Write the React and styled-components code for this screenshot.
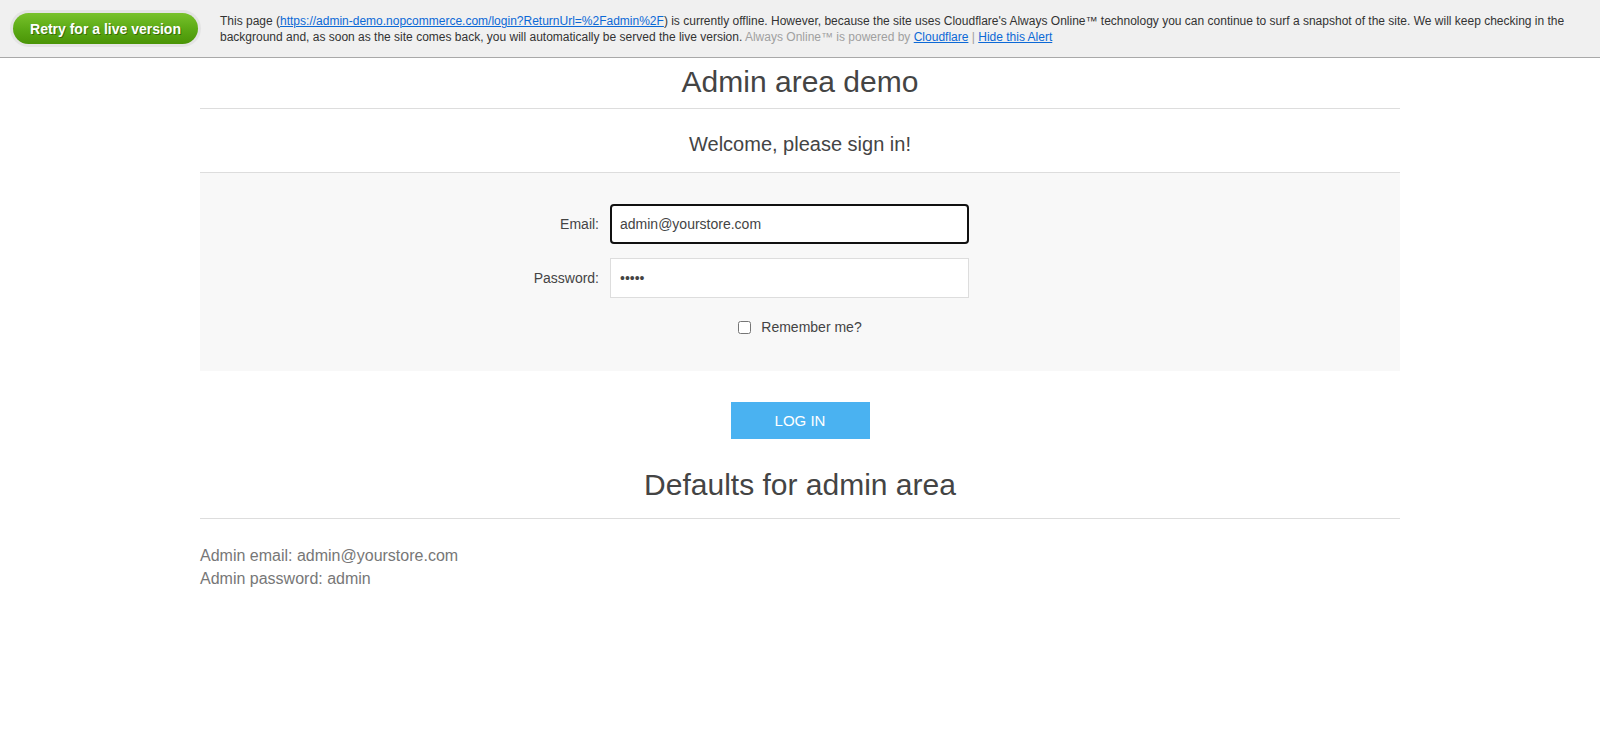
import React, { useState } from 'react';
import styled, { createGlobalStyle } from 'styled-components';

const GlobalStyle = createGlobalStyle`
  body {
    margin: 0;
    background: #fff;
    font-family: Arial, "Liberation Sans", Helvetica, sans-serif;
    color: #444;
  }
`;

// cloudflare alert bar
const AlertBar = styled.div`
  display: flex;
  align-items: flex-start;
  height: 57px;
  box-sizing: content-box;
  background: #f0f0f0;
  border-bottom: 1px solid #a9a9a9;
`;

const RetryHalo = styled.div`
  flex: none;
  margin: 10px 0 0 10px;
  padding: 3px;
  border-radius: 20px;
  background: #e4e4e4;
`;

const RetryButton = styled.button`
  display: block;
  width: 185px;
  height: 31px;
  border: none;
  border-radius: 16px;
  background: linear-gradient(to bottom, #78c22b 0%, #5aa814 55%, #4a9406 100%);
  color: #fff;
  font-family: Arial, "Liberation Sans", sans-serif;
  font-weight: bold;
  font-size: 14px;
  text-shadow: 1px 1px 0 rgba(0, 0, 0, 0.35);
  cursor: pointer;
`;

const AlertText = styled.p`
  margin: 13px 18px 0 19px;
  font-size: 12px;
  line-height: 16px;
  color: #333;
`;

const AlertLink = styled.a`
  color: #0c69d6;
  text-decoration: underline;
`;

const Muted = styled.span`
  color: #a0a0a0;
`;

// page
const Page = styled.div`
  width: 1200px;
  margin: 0 auto;
`;

const PageTitle = styled.h1`
  margin: 0;
  padding: ${props => props.padding || '6px 0 8px'};
  border-bottom: 1px solid #ddd;
  text-align: center;
  font-weight: normal;
  font-size: 30px;
  line-height: 36px;
  color: #444;
`;

const SubTitle = styled.h2`
  margin: 0;
  padding: 22px 0 15px;
  border-bottom: 1px solid #ddd;
  text-align: center;
  font-weight: normal;
  font-size: 20px;
  line-height: 26px;
  color: #444;
`;

const FormPanel = styled.div`
  display: flex;
  flex-direction: column;
  gap: 14px;
  padding: 31px 0 36px;
  background: #f8f8f8;
`;

const Row = styled.div`
  display: flex;
  align-items: center;
  justify-content: ${props => props.center ? 'center' : 'flex-start'};
`;

const Label = styled.label`
  width: 399px;
  margin-right: 11px;
  text-align: right;
  font-size: 14px;
  color: #444;
`;

const Input = styled.input`
  box-sizing: border-box;
  width: 359px;
  height: 40px;
  padding: 0 ${props => props.focused ? '8px' : '9px'};
  border: ${props => props.focused ? '2px solid #111' : '1px solid #ddd'};
  border-radius: ${props => props.focused ? '4px' : '0'};
  background: #fff;
  font-family: Arial, "Liberation Sans", sans-serif;
  font-size: 14px;
  color: #444;
  outline: none;
`;

const CheckLabel = styled.label`
  display: flex;
  align-items: center;
  gap: 10px;
  margin-top: 7px;
  font-size: 14px;
  color: #444;

  input {
    width: 13px;
    height: 13px;
    margin: 0;
  }
`;

const Actions = styled.div`
  display: flex;
  justify-content: center;
  padding: 31px 0 14px;
`;

const LoginButton = styled.button`
  width: 139px;
  height: 37px;
  border: none;
  background: #4ab2f1;
  color: #fff;
  font-family: Arial, "Liberation Sans", sans-serif;
  font-size: 15px;
  text-transform: uppercase;
  cursor: pointer;
`;

const Defaults = styled.div`
  padding-top: 25px;
  font-size: 16px;
  line-height: 23px;
  color: #777;
`;

const App = () => {
  const [email, setEmail] = useState('admin@yourstore.com');
  const [password, setPassword] = useState('admin');
  const [remember, setRemember] = useState(false);

  return (
    <>
      <GlobalStyle />
      <AlertBar>
        <RetryHalo>
          <RetryButton>Retry for a live version</RetryButton>
        </RetryHalo>
        <AlertText>
          This page (<AlertLink href="#">https://admin-demo.nopcommerce.com/login?ReturnUrl=%2Fadmin%2F</AlertLink>) is
          currently offline. However, because the site uses Cloudflare's Always Online™ technology you can continue
          to surf a snapshot of the site. We will keep checking in the background and, as soon as the site comes back,
          you will automatically be served the live version. <Muted>Always Online™ is powered by</Muted>{' '}
          <AlertLink href="#">Cloudflare</AlertLink> <Muted>|</Muted> <AlertLink href="#">Hide this Alert</AlertLink>
        </AlertText>
      </AlertBar>

      <Page>
        <PageTitle>Admin area demo</PageTitle>
        <SubTitle>Welcome, please sign in!</SubTitle>

        <FormPanel>
          <Row>
            <Label>Email:</Label>
            <Input focused value={email} onChange={e => setEmail(e.target.value)} />
          </Row>
          <Row>
            <Label>Password:</Label>
            <Input type="password" value={password} onChange={e => setPassword(e.target.value)} />
          </Row>
          <Row center>
            <CheckLabel>
              <input type="checkbox" checked={remember} onChange={e => setRemember(e.target.checked)} />
              Remember me?
            </CheckLabel>
          </Row>
        </FormPanel>

        <Actions>
          <LoginButton>Log in</LoginButton>
        </Actions>

        <PageTitle padding="14px 0 15px">Defaults for admin area</PageTitle>
        <Defaults>
          Admin email: admin@yourstore.com
          <br />
          Admin password: admin
        </Defaults>
      </Page>
    </>
  );
};

export default App;
